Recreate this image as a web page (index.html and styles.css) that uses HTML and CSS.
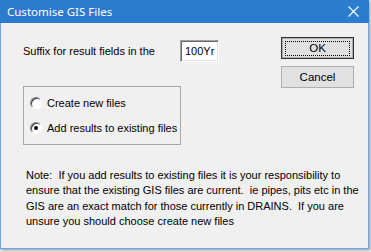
FILE: index.html
```html
<!DOCTYPE html>
<html lang="en">
<head>
    <meta charset="UTF-8">
    <title>Customise GIS Files</title>
    <link rel="stylesheet" href="styles.css">
</head>
<body>
    <div class="window">
        <div class="titlebar">
            <span class="caption">Customise GIS Files</span>
            <span class="close">
                <svg width="11" height="11" viewBox="0 0 11 11">
                    <path d="M0.5 0.5 L10.5 10.5 M10.5 0.5 L0.5 10.5" stroke="#fff" stroke-width="1.1" fill="none"/>
                </svg>
            </span>
        </div>
        <div class="client">
            <div class="left">
                <div class="suffix-row">
                    <span class="label">Suffix for result fields in the</span>
                    <span class="textbox">100Yr</span>
                </div>
                <div class="groupbox">
                    <div class="radio-row">
                        <span class="radio"></span>
                        <span>Create new files</span>
                    </div>
                    <div class="radio-row">
                        <span class="radio checked"></span>
                        <span>Add results to existing files</span>
                    </div>
                </div>
            </div>
            <div class="buttons">
                <div class="btn default"><span class="focus">OK</span></div>
                <div class="btn">Cancel</div>
            </div>
            <div class="note">
                Note:&nbsp; If you add results to existing files it is your responsibility to<br>
                ensure that the existing GIS files are current.&nbsp; ie pipes, pits etc in the<br>
                GIS are an exact match for those currently in DRAINS.&nbsp; If you are<br>
                unsure you should choose create new files
            </div>
        </div>
    </div>
</body>
</html>
```

FILE: styles.css
```css
/* page behind the dialog */
body, html {
    margin: 0;
    padding: 0;
    height: 100%;
    overflow: hidden;
    background: #e9e9e9;
}
/* dialog window */
.window {
    width: 367px;
    height: 248px;
    display: flex;
    flex-direction: column;
    background: #f0f0f0;
    border: 1px solid #6aa6e6;
    border-top: none;
    box-shadow: 1px 1px 3px rgba(0, 0, 0, 0.35);
    font-family: 'Liberation Sans', Arial, sans-serif;
    font-size: 11px;
    color: #000;
}
/* blue title bar */
.titlebar {
    height: 23px;
    margin: 0 -1px;
    padding: 0 10px 0 7px;
    display: flex;
    align-items: center;
    justify-content: space-between;
    background: #2b7bcf;
    color: #fff;
}
.caption {
    font-family: 'Noto Sans', 'Liberation Sans', sans-serif;
    font-size: 11.5px;
    margin-top: -1px;
}
.close {
    display: flex;
    margin-top: -1px;
}
/* dialog body */
.client {
    flex: 1;
    display: grid;
    grid-template-columns: 1fr auto;
    align-items: start;
    align-content: start;
    padding: 14px 14px 0 22px;
}
.left {
    padding-top: 3px;
}
.suffix-row {
    display: flex;
    align-items: center;
    justify-content: space-between;
    width: 196px;
}
/* sunken edit box */
.textbox {
    width: 29px;
    height: 20px;
    line-height: 20px;
    padding: 0 4px 0 4px;
    background: #fff;
    border-style: solid;
    border-width: 1px;
    border-color: #a0a0a0 #fff #fff #a0a0a0;
    box-shadow: inset 1px 1px 0 #696969, inset -1px -1px 0 #e3e3e3;
}
/* radio group */
.groupbox {
    margin-top: 24px;
    width: 156px;
    height: 48px;
    border: 1px solid #a8a8a8;
    display: flex;
    flex-direction: column;
    gap: 12px;
    padding-top: 9px;
}
.radio-row {
    display: flex;
    align-items: center;
    gap: 5px;
    padding-left: 6px;
    height: 13px;
}
.radio {
    width: 10px;
    height: 10px;
    border-radius: 50%;
    border: 1px solid;
    border-color: #808080 #fff #fff #808080;
    background: #fff;
    box-shadow: inset 1px 1px 0 #404040;
    display: flex;
    align-items: center;
    justify-content: center;
}
.radio.checked::after {
    content: '';
    width: 4px;
    height: 4px;
    border-radius: 50%;
    background: #000;
}
/* push buttons */
.buttons {
    display: flex;
    flex-direction: column;
    gap: 7px;
}
.btn {
    width: 71px;
    height: 20px;
    border: 1px solid #adadad;
    background: #e1e1e1;
    display: flex;
    align-items: center;
    justify-content: center;
    font-size: 11.5px;
}
.btn.default {
    border: 1px solid #333;
    box-shadow: inset 0 0 0 1px #adadad;
}
.btn.default .focus {
    width: 63px;
    height: 13px;
    line-height: 13px;
    text-align: center;
    border: 1px dotted #000;
}
/* explanatory note */
.note {
    grid-column: 1 / 3;
    margin-top: 23px;
    padding-left: 3px;
    line-height: 15.3px;
    white-space: nowrap;
}
```
